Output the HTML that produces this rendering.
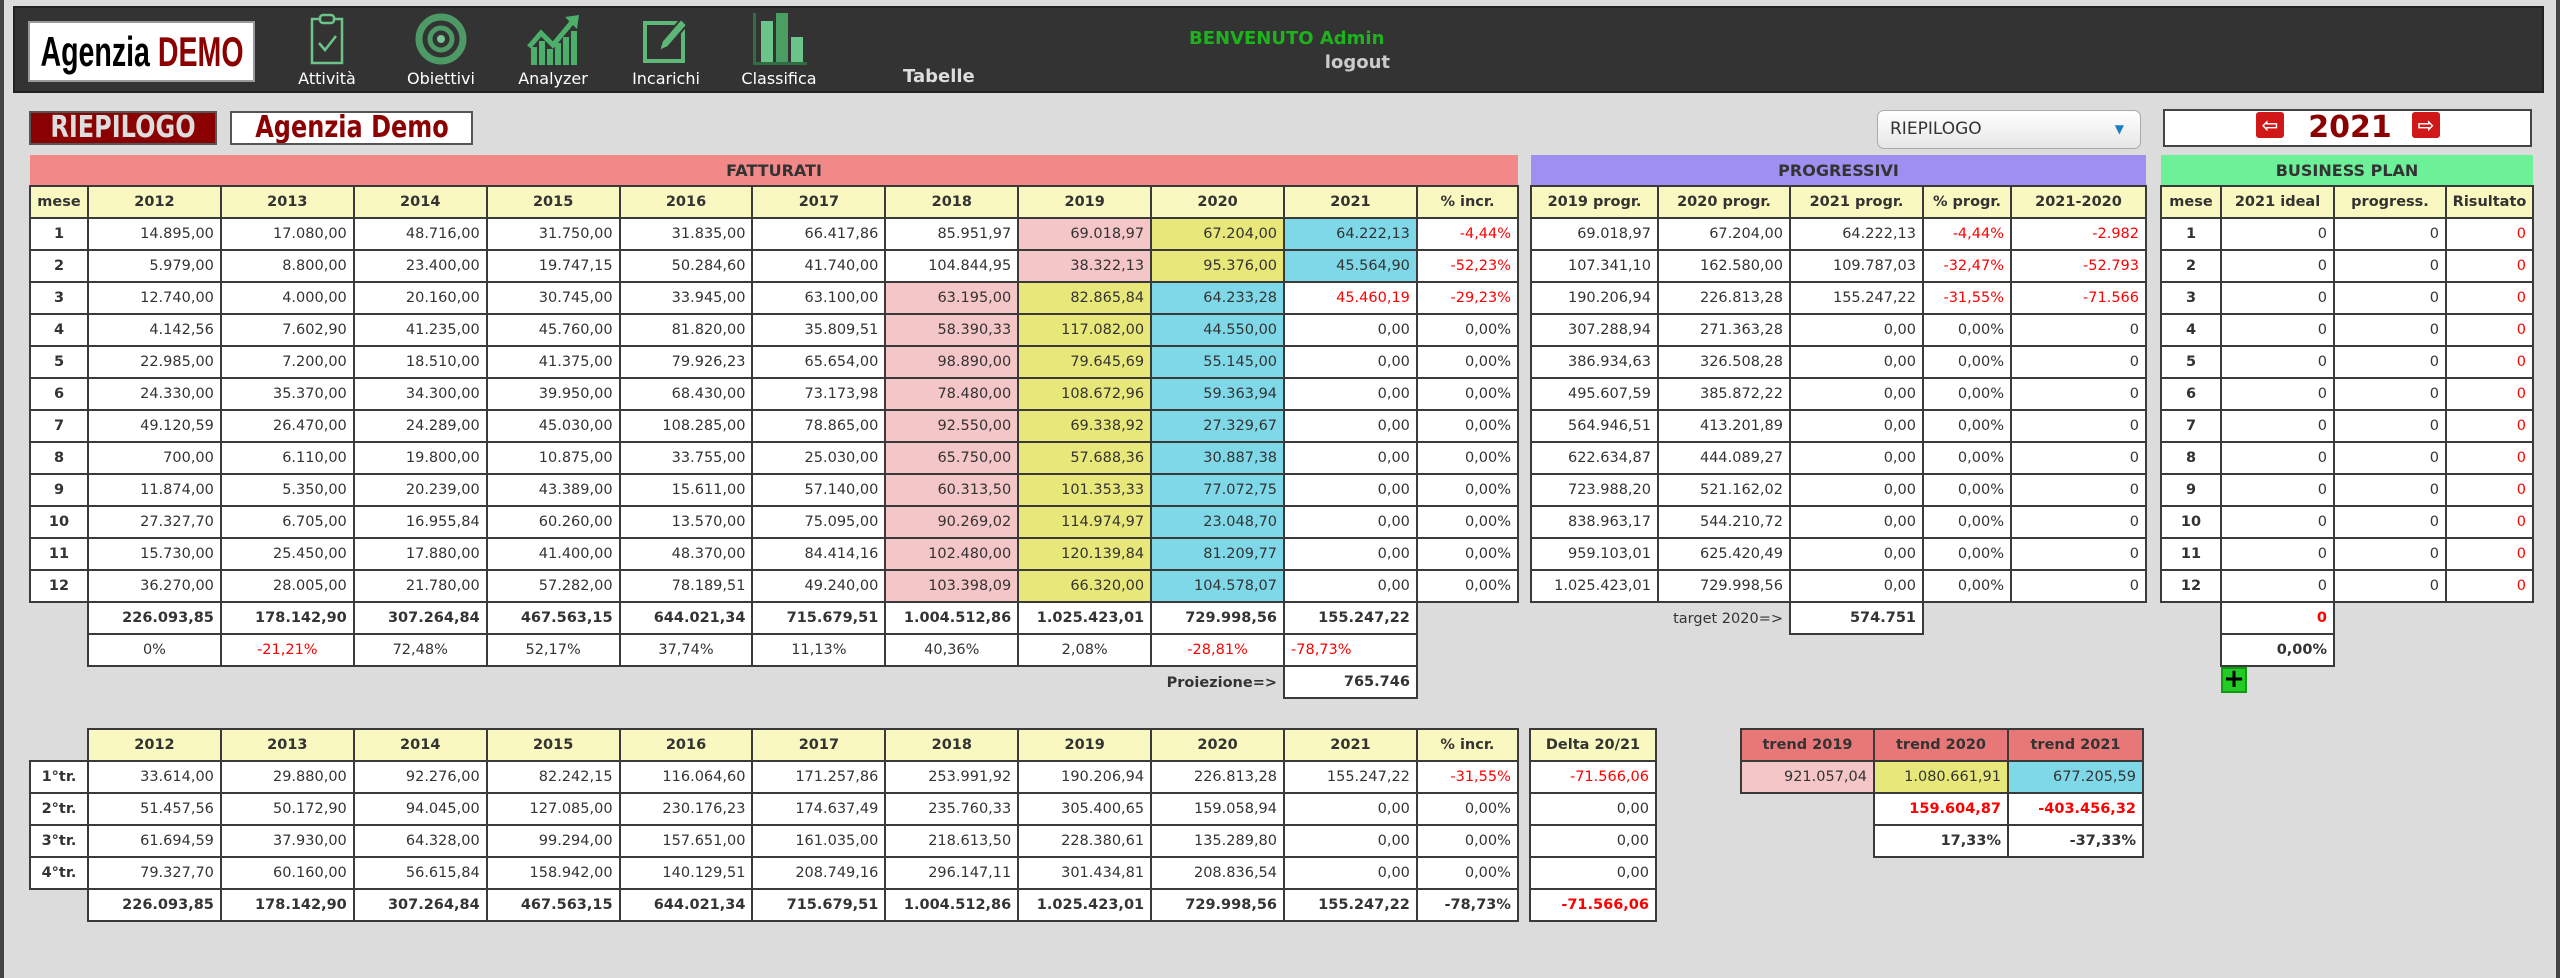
<!DOCTYPE html>
<html><head><meta charset="utf-8">
<style>
*{box-sizing:border-box;margin:0;padding:0}
body{width:2560px;height:978px;background:#dcdcdc;font-family:"DejaVu Sans","Liberation Sans",sans-serif;font-size:14.5px;color:#333;position:relative;overflow:hidden}
.frameL{position:absolute;left:0;top:0;width:4px;height:978px;background:#444}
.frameR{position:absolute;right:0;top:0;width:4px;height:978px;background:#444}
.hdr{position:absolute;left:13px;top:6px;width:2531px;height:87px;background:#333;border:2px solid #222}
.logo{position:absolute;left:28px;top:21px;width:227px;height:61px;background:#fff;border:2px solid #999;font-family:"Liberation Sans",sans-serif;font-weight:bold;font-size:42px;line-height:57px;white-space:nowrap;overflow:hidden}
.sq{position:absolute;left:50%;top:0;transform:translateX(-50%) scaleX(.68);white-space:nowrap}
.sq2{position:absolute;left:50%;top:0;transform:translateX(-50%) scaleX(.8);white-space:nowrap}
.nav{position:absolute;top:13px;width:110px;text-align:center;color:#fff;font-size:16px}
.nav svg{display:block;margin:0 auto 6px}
.nav div{position:absolute;top:56px;left:0;width:110px;text-align:center}
table{position:absolute;border-collapse:collapse;table-layout:fixed}
td{border:2px solid #3a3a3a;height:32px;padding:0 6px;text-align:right;white-space:nowrap;background:#fff;overflow:hidden}
td.h{background:#f8f8c0;font-weight:bold;text-align:center}
td.c{text-align:center;font-weight:bold}
td.e{border:none;background:transparent}
td.band{border:none;text-align:center;font-weight:bold;font-size:16px;height:31px}
.r{color:#f00}
.b{font-weight:bold}
.pk{background:#f4c6c8}
.yl{background:#e8e87a}
.bl{background:#7fd8e8}
.ctr{text-align:center}
</style></head><body>
<div class="frameL"></div><div class="frameR"></div>
<div class="hdr"></div>
<div class="logo"><span class="sq"><span style="color:#000">Agenzia</span> <span style="color:#8b0000">DEMO</span></span></div>

<div class="nav" style="left:272px"><svg width="40" height="52" viewBox="0 0 40 52"><rect x="5" y="6" width="30" height="44" fill="none" stroke="#6cc48a" stroke-width="2.5"/><rect x="13" y="2" width="14" height="8" rx="3" fill="#333" stroke="#6cc48a" stroke-width="2.5"/><path d="M12 30 L18 37 L29 23" fill="none" stroke="#6cc48a" stroke-width="2.5"/></svg><div>Attività</div></div>
<div class="nav" style="left:386px"><svg width="52" height="52" viewBox="0 0 52 52"><circle cx="26" cy="26" r="22" fill="none" stroke="#4d9a66" stroke-width="7"/><circle cx="26" cy="26" r="11" fill="none" stroke="#4d9a66" stroke-width="5"/><circle cx="26" cy="26" r="4" fill="#7cc494"/></svg><div>Obiettivi</div></div>
<div class="nav" style="left:498px"><svg width="56" height="52" viewBox="0 0 56 52"><g fill="#4caf6a"><rect x="6" y="34" width="6" height="18"/><rect x="14" y="28" width="6" height="24"/><rect x="22" y="36" width="6" height="16"/><rect x="30" y="30" width="6" height="22"/><rect x="38" y="24" width="6" height="28"/><rect x="46" y="18" width="6" height="34"/></g><path d="M4 34 L16 20 L28 32 L48 8" fill="none" stroke="#4caf6a" stroke-width="5"/><path d="M40 4 L54 2 L52 16 Z" fill="#4caf6a"/></svg><div>Analyzer</div></div>
<div class="nav" style="left:611px"><svg width="50" height="52" viewBox="0 0 50 52"><rect x="4" y="10" width="38" height="38" fill="none" stroke="#5db878" stroke-width="4"/><path d="M18 38 L21 28 L40 6 L46 12 L27 34 Z" fill="#5db878" stroke="#333" stroke-width="2"/></svg><div>Incarichi</div></div>
<div class="nav" style="left:724px"><svg width="60" height="52" viewBox="0 0 60 52"><rect x="4" y="0" width="3" height="52" fill="#2e6e40"/><rect x="4" y="49" width="54" height="3" fill="#2e6e40"/><rect x="12" y="8" width="12" height="41" fill="#6cc48a"/><rect x="27" y="0" width="12" height="49" fill="#4a9e64"/><rect x="42" y="24" width="12" height="25" fill="#6cc48a"/></svg><div>Classifica</div></div>
<div style="position:absolute;left:903px;top:66px;color:#ddd;font-weight:bold;font-size:18px">Tabelle</div>
<div style="position:absolute;left:1189px;top:28px;color:#1db31d;font-weight:bold;font-size:18px">BENVENUTO Admin</div>
<div style="position:absolute;left:1322px;top:52px;width:68px;text-align:right;color:#ccc;font-weight:bold;font-size:18px">logout</div>

<div style="position:absolute;left:29px;top:111px;width:188px;height:34px;background:#8b0000;border:2px solid #555;color:#ddd;font-weight:bold;font-size:30px;line-height:30px;overflow:hidden"><span class="sq2">RIEPILOGO</span></div>
<div style="position:absolute;left:230px;top:111px;width:243px;height:34px;background:#fff;border:2px solid #555;color:#8b0000;font-weight:bold;font-size:30px;line-height:30px;overflow:hidden"><span class="sq2">Agenzia Demo</span></div>

<div style="position:absolute;left:1877px;top:110px;width:264px;height:39px;background:linear-gradient(#fff,#e6e6e6);border:1px solid #aaa;border-radius:7px;font-size:17px;line-height:37px;padding-left:12px;color:#333">RIEPILOGO<span style="position:absolute;right:16px;top:0;color:#1a7fc0;font-size:12px">▼</span></div>
<div style="position:absolute;left:2163px;top:109px;width:369px;height:38px;background:#fff;border:2px solid #444"></div>
<div style="position:absolute;left:2256px;top:112px;width:28px;height:26px;background:#d01818;border-radius:3px;color:#fff;font-weight:bold;text-align:center;line-height:26px;font-size:20px">⇦</div>
<div style="position:absolute;left:2412px;top:112px;width:28px;height:26px;background:#d01818;border-radius:3px;color:#fff;font-weight:bold;text-align:center;line-height:26px;font-size:20px">⇨</div>
<div style="position:absolute;left:2300px;top:108px;width:100px;text-align:center;color:#8b0000;font-weight:bold;font-size:30px;line-height:40px">2021</div>

<table style="left:29px;top:155px;width:1488px">
<colgroup><col style="width:58px"><col span="10" style="width:132.9px"><col style="width:101px"></colgroup>
<tr><td class="band" colspan="12" style="background:#f28888">FATTURATI</td></tr>
<tr><td class="h">mese</td><td class="h">2012</td><td class="h">2013</td><td class="h">2014</td><td class="h">2015</td><td class="h">2016</td><td class="h">2017</td><td class="h">2018</td><td class="h">2019</td><td class="h">2020</td><td class="h">2021</td><td class="h">% incr.</td></tr>
<tr><td class="c">1</td><td>14.895,00</td><td>17.080,00</td><td>48.716,00</td><td>31.750,00</td><td>31.835,00</td><td>66.417,86</td><td>85.951,97</td><td class="pk">69.018,97</td><td class="yl">67.204,00</td><td class="bl">64.222,13</td><td class="r">-4,44%</td></tr>
<tr><td class="c">2</td><td>5.979,00</td><td>8.800,00</td><td>23.400,00</td><td>19.747,15</td><td>50.284,60</td><td>41.740,00</td><td>104.844,95</td><td class="pk">38.322,13</td><td class="yl">95.376,00</td><td class="bl">45.564,90</td><td class="r">-52,23%</td></tr>
<tr><td class="c">3</td><td>12.740,00</td><td>4.000,00</td><td>20.160,00</td><td>30.745,00</td><td>33.945,00</td><td>63.100,00</td><td class="pk">63.195,00</td><td class="yl">82.865,84</td><td class="bl">64.233,28</td><td class="r">45.460,19</td><td class="r">-29,23%</td></tr>
<tr><td class="c">4</td><td>4.142,56</td><td>7.602,90</td><td>41.235,00</td><td>45.760,00</td><td>81.820,00</td><td>35.809,51</td><td class="pk">58.390,33</td><td class="yl">117.082,00</td><td class="bl">44.550,00</td><td>0,00</td><td>0,00%</td></tr>
<tr><td class="c">5</td><td>22.985,00</td><td>7.200,00</td><td>18.510,00</td><td>41.375,00</td><td>79.926,23</td><td>65.654,00</td><td class="pk">98.890,00</td><td class="yl">79.645,69</td><td class="bl">55.145,00</td><td>0,00</td><td>0,00%</td></tr>
<tr><td class="c">6</td><td>24.330,00</td><td>35.370,00</td><td>34.300,00</td><td>39.950,00</td><td>68.430,00</td><td>73.173,98</td><td class="pk">78.480,00</td><td class="yl">108.672,96</td><td class="bl">59.363,94</td><td>0,00</td><td>0,00%</td></tr>
<tr><td class="c">7</td><td>49.120,59</td><td>26.470,00</td><td>24.289,00</td><td>45.030,00</td><td>108.285,00</td><td>78.865,00</td><td class="pk">92.550,00</td><td class="yl">69.338,92</td><td class="bl">27.329,67</td><td>0,00</td><td>0,00%</td></tr>
<tr><td class="c">8</td><td>700,00</td><td>6.110,00</td><td>19.800,00</td><td>10.875,00</td><td>33.755,00</td><td>25.030,00</td><td class="pk">65.750,00</td><td class="yl">57.688,36</td><td class="bl">30.887,38</td><td>0,00</td><td>0,00%</td></tr>
<tr><td class="c">9</td><td>11.874,00</td><td>5.350,00</td><td>20.239,00</td><td>43.389,00</td><td>15.611,00</td><td>57.140,00</td><td class="pk">60.313,50</td><td class="yl">101.353,33</td><td class="bl">77.072,75</td><td>0,00</td><td>0,00%</td></tr>
<tr><td class="c">10</td><td>27.327,70</td><td>6.705,00</td><td>16.955,84</td><td>60.260,00</td><td>13.570,00</td><td>75.095,00</td><td class="pk">90.269,02</td><td class="yl">114.974,97</td><td class="bl">23.048,70</td><td>0,00</td><td>0,00%</td></tr>
<tr><td class="c">11</td><td>15.730,00</td><td>25.450,00</td><td>17.880,00</td><td>41.400,00</td><td>48.370,00</td><td>84.414,16</td><td class="pk">102.480,00</td><td class="yl">120.139,84</td><td class="bl">81.209,77</td><td>0,00</td><td>0,00%</td></tr>
<tr><td class="c">12</td><td>36.270,00</td><td>28.005,00</td><td>21.780,00</td><td>57.282,00</td><td>78.189,51</td><td>49.240,00</td><td class="pk">103.398,09</td><td class="yl">66.320,00</td><td class="bl">104.578,07</td><td>0,00</td><td>0,00%</td></tr>
<tr class="b"><td class="e"></td><td>226.093,85</td><td>178.142,90</td><td>307.264,84</td><td>467.563,15</td><td>644.021,34</td><td>715.679,51</td><td>1.004.512,86</td><td>1.025.423,01</td><td>729.998,56</td><td>155.247,22</td><td class="e"></td></tr>
<tr><td class="e"></td><td class="ctr">0%</td><td class="ctr r">-21,21%</td><td class="ctr">72,48%</td><td class="ctr">52,17%</td><td class="ctr">37,74%</td><td class="ctr">11,13%</td><td class="ctr">40,36%</td><td class="ctr">2,08%</td><td class="ctr r">-28,81%</td><td class="r" style="text-align:left">-78,73%</td><td class="e"></td></tr>
<tr><td class="e" colspan="10" style="text-align:right;font-weight:bold">Proiezione=&gt;</td><td class="b">765.746</td><td class="e"></td></tr>
</table>

<table style="left:1530px;top:155px;width:615px">
<colgroup><col style="width:127px"><col style="width:132px"><col style="width:133px"><col style="width:88px"><col style="width:135px"></colgroup>
<tr><td class="band" colspan="5" style="background:#9f8ff0">PROGRESSIVI</td></tr>
<tr><td class="h">2019 progr.</td><td class="h">2020 progr.</td><td class="h">2021 progr.</td><td class="h" style="padding:0 2px">% progr.</td><td class="h">2021-2020</td></tr>
<tr><td>69.018,97</td><td>67.204,00</td><td>64.222,13</td><td class="r">-4,44%</td><td class="r">-2.982</td></tr>
<tr><td>107.341,10</td><td>162.580,00</td><td>109.787,03</td><td class="r">-32,47%</td><td class="r">-52.793</td></tr>
<tr><td>190.206,94</td><td>226.813,28</td><td>155.247,22</td><td class="r">-31,55%</td><td class="r">-71.566</td></tr>
<tr><td>307.288,94</td><td>271.363,28</td><td>0,00</td><td>0,00%</td><td>0</td></tr>
<tr><td>386.934,63</td><td>326.508,28</td><td>0,00</td><td>0,00%</td><td>0</td></tr>
<tr><td>495.607,59</td><td>385.872,22</td><td>0,00</td><td>0,00%</td><td>0</td></tr>
<tr><td>564.946,51</td><td>413.201,89</td><td>0,00</td><td>0,00%</td><td>0</td></tr>
<tr><td>622.634,87</td><td>444.089,27</td><td>0,00</td><td>0,00%</td><td>0</td></tr>
<tr><td>723.988,20</td><td>521.162,02</td><td>0,00</td><td>0,00%</td><td>0</td></tr>
<tr><td>838.963,17</td><td>544.210,72</td><td>0,00</td><td>0,00%</td><td>0</td></tr>
<tr><td>959.103,01</td><td>625.420,49</td><td>0,00</td><td>0,00%</td><td>0</td></tr>
<tr><td>1.025.423,01</td><td>729.998,56</td><td>0,00</td><td>0,00%</td><td>0</td></tr>
<tr><td class="e" colspan="2" style="text-align:right">target 2020=&gt;</td><td class="b">574.751</td><td class="e"></td><td class="e"></td></tr>
</table>

<table style="left:2160px;top:155px;width:372px">
<colgroup><col style="width:60px"><col style="width:113px"><col style="width:112px"><col style="width:87px"></colgroup>
<tr><td class="band" colspan="4" style="background:#6cf098">BUSINESS PLAN</td></tr>
<tr><td class="h">mese</td><td class="h">2021 ideal</td><td class="h">progress.</td><td class="h" style="padding:0 2px">Risultato</td></tr>
<tr><td class="c">1</td><td>0</td><td>0</td><td class="r">0</td></tr>
<tr><td class="c">2</td><td>0</td><td>0</td><td class="r">0</td></tr>
<tr><td class="c">3</td><td>0</td><td>0</td><td class="r">0</td></tr>
<tr><td class="c">4</td><td>0</td><td>0</td><td class="r">0</td></tr>
<tr><td class="c">5</td><td>0</td><td>0</td><td class="r">0</td></tr>
<tr><td class="c">6</td><td>0</td><td>0</td><td class="r">0</td></tr>
<tr><td class="c">7</td><td>0</td><td>0</td><td class="r">0</td></tr>
<tr><td class="c">8</td><td>0</td><td>0</td><td class="r">0</td></tr>
<tr><td class="c">9</td><td>0</td><td>0</td><td class="r">0</td></tr>
<tr><td class="c">10</td><td>0</td><td>0</td><td class="r">0</td></tr>
<tr><td class="c">11</td><td>0</td><td>0</td><td class="r">0</td></tr>
<tr><td class="c">12</td><td>0</td><td>0</td><td class="r">0</td></tr>
<tr><td class="e"></td><td class="r b">0</td><td class="e"></td><td class="e"></td></tr>
<tr><td class="e"></td><td class="b">0,00%</td><td class="e"></td><td class="e"></td></tr>
</table>
<div style="position:absolute;left:2221px;top:667px;width:26px;height:26px;background:#22cc22;border:2px solid #119911;color:#000;font-weight:bold;font-size:26px;line-height:20px;text-align:center">+</div>

<table style="left:29px;top:728px;width:1488px">
<colgroup><col style="width:58px"><col span="10" style="width:132.9px"><col style="width:101px"></colgroup>
<tr><td class="e"></td><td class="h">2012</td><td class="h">2013</td><td class="h">2014</td><td class="h">2015</td><td class="h">2016</td><td class="h">2017</td><td class="h">2018</td><td class="h">2019</td><td class="h">2020</td><td class="h">2021</td><td class="h">% incr.</td></tr>
<tr><td class="c" style="padding:0 2px">1°tr.</td><td>33.614,00</td><td>29.880,00</td><td>92.276,00</td><td>82.242,15</td><td>116.064,60</td><td>171.257,86</td><td>253.991,92</td><td>190.206,94</td><td>226.813,28</td><td>155.247,22</td><td class="r">-31,55%</td></tr>
<tr><td class="c" style="padding:0 2px">2°tr.</td><td>51.457,56</td><td>50.172,90</td><td>94.045,00</td><td>127.085,00</td><td>230.176,23</td><td>174.637,49</td><td>235.760,33</td><td>305.400,65</td><td>159.058,94</td><td>0,00</td><td>0,00%</td></tr>
<tr><td class="c" style="padding:0 2px">3°tr.</td><td>61.694,59</td><td>37.930,00</td><td>64.328,00</td><td>99.294,00</td><td>157.651,00</td><td>161.035,00</td><td>218.613,50</td><td>228.380,61</td><td>135.289,80</td><td>0,00</td><td>0,00%</td></tr>
<tr><td class="c" style="padding:0 2px">4°tr.</td><td>79.327,70</td><td>60.160,00</td><td>56.615,84</td><td>158.942,00</td><td>140.129,51</td><td>208.749,16</td><td>296.147,11</td><td>301.434,81</td><td>208.836,54</td><td>0,00</td><td>0,00%</td></tr>
<tr class="b"><td class="e"></td><td>226.093,85</td><td>178.142,90</td><td>307.264,84</td><td>467.563,15</td><td>644.021,34</td><td>715.679,51</td><td>1.004.512,86</td><td>1.025.423,01</td><td>729.998,56</td><td>155.247,22</td><td>-78,73%</td></tr>
</table>

<table style="left:1529px;top:728px;width:128px">
<tr><td class="h">Delta 20/21</td></tr>
<tr><td class="r">-71.566,06</td></tr>
<tr><td>0,00</td></tr>
<tr><td>0,00</td></tr>
<tr><td>0,00</td></tr>
<tr><td class="r b">-71.566,06</td></tr>
</table>

<table style="left:1740px;top:728px;width:402px">
<colgroup><col style="width:133px"><col style="width:134px"><col style="width:135px"></colgroup>
<tr><td class="h" style="background:#e87878">trend 2019</td><td class="h" style="background:#e87878">trend 2020</td><td class="h" style="background:#e87878">trend 2021</td></tr>
<tr><td class="pk">921.057,04</td><td class="yl">1.080.661,91</td><td class="bl">677.205,59</td></tr>
<tr><td class="e"></td><td class="r b">159.604,87</td><td class="r b">-403.456,32</td></tr>
<tr><td class="e"></td><td class="b">17,33%</td><td class="b">-37,33%</td></tr>
</table>
</body></html>
